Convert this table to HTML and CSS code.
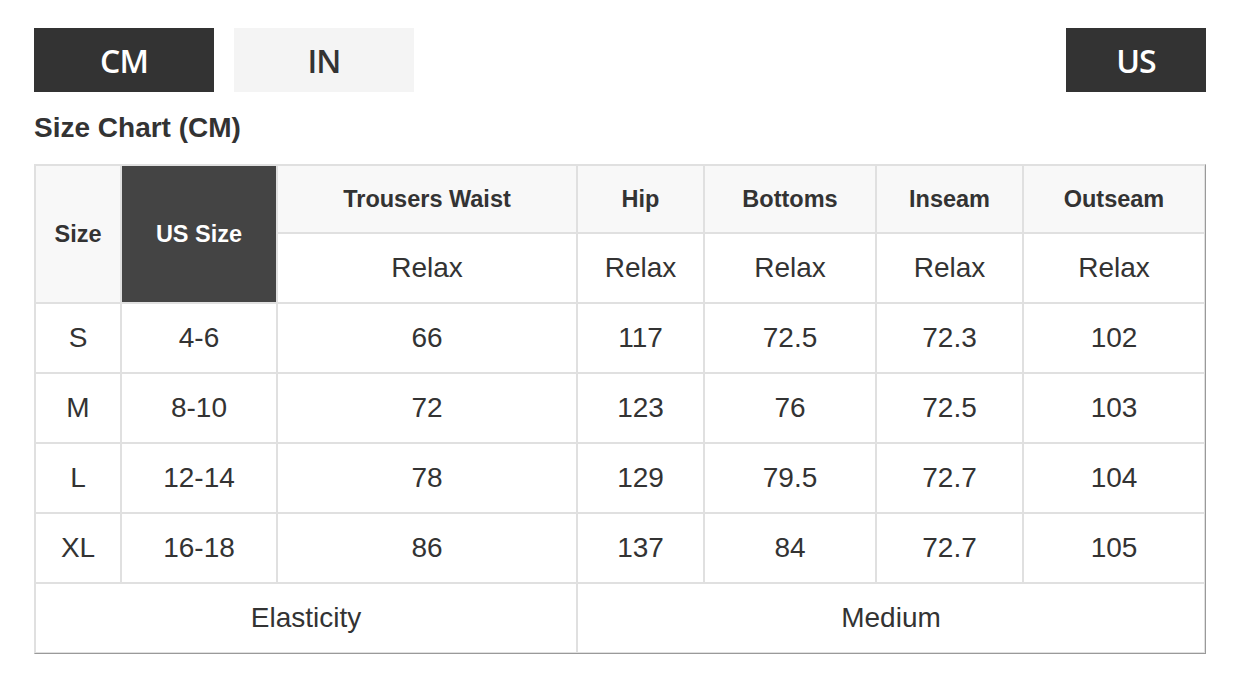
FILE: index.html
```html
<!DOCTYPE html>
<html>
<head>
<meta charset="utf-8">
<link rel="stylesheet" href="styles.css">
</head>
<body>
<div class="page">
  <div class="toolbar">
    <div class="units">
      <div class="btn active">CM</div>
      <div class="btn">IN</div>
    </div>
    <div class="btn active us">US</div>
  </div>
  <h2 class="title">Size Chart (CM)</h2>
  <table class="chart">
    <colgroup>
      <col class="c1"><col class="c2"><col class="c3"><col class="c4"><col class="c5"><col class="c6"><col class="c7">
    </colgroup>
    <tr class="hrow">
      <th rowspan="2" class="hd">Size</th>
      <th rowspan="2" class="dark">US Size</th>
      <th class="hd">Trousers Waist</th>
      <th class="hd">Hip</th>
      <th class="hd">Bottoms</th>
      <th class="hd">Inseam</th>
      <th class="hd">Outseam</th>
    </tr>
    <tr>
      <td>Relax</td><td>Relax</td><td>Relax</td><td>Relax</td><td>Relax</td>
    </tr>
    <tr><td>S</td><td>4-6</td><td>66</td><td>117</td><td>72.5</td><td>72.3</td><td>102</td></tr>
    <tr><td>M</td><td>8-10</td><td>72</td><td>123</td><td>76</td><td>72.5</td><td>103</td></tr>
    <tr><td>L</td><td>12-14</td><td>78</td><td>129</td><td>79.5</td><td>72.7</td><td>104</td></tr>
    <tr><td>XL</td><td>16-18</td><td>86</td><td>137</td><td>84</td><td>72.7</td><td>105</td></tr>
    <tr><td colspan="3">Elasticity</td><td colspan="4">Medium</td></tr>
  </table>
</div>
</body>
</html>
```

FILE: styles.css
```css
html, body {
  margin: 0;
  padding: 0;
  background: #fff;
}
.page {
  width: 1172px;
  padding: 28px 0 0 34px;
  color: #333;
  font-family: "Liberation Sans", Arial, sans-serif;
}
.toolbar {
  display: flex;
  justify-content: space-between;
  align-items: center;
}
.units {
  display: flex;
  gap: 20px;
}
.btn {
  width: 180px;
  height: 64px;
  display: flex;
  align-items: center;
  justify-content: center;
  background: #f4f4f4;
  color: #333;
  font-family: "Open Sans", sans-serif;
  font-size: 32px;
  font-weight: 600;
  letter-spacing: -1px;
}
.btn.active {
  background: #333;
  color: #fff;
}
.btn.us {
  width: 140px;
}
.title {
  margin: 20px 0 0;
  font-size: 28px;
  font-weight: bold;
  line-height: 32px;
  height: 52px;
}
.chart {
  width: 1172px;
  table-layout: fixed;
  border-collapse: separate;
  border-spacing: 0;
  border: 1px solid;
  border-color: #e0e0e0 #9a9a9a #9a9a9a #e0e0e0;
}
.c1 { width: 86px; }
.c2 { width: 156px; }
.c3 { width: 300px; }
.c4 { width: 127px; }
.c5 { width: 172px; }
.c6 { width: 147px; }
.c7 { width: 182px; }
.chart th, .chart td {
  border: 1px solid #e0e0e0;
  height: 68px;
  padding: 0;
  text-align: center;
  vertical-align: middle;
}
.chart td {
  font-size: 28px;
  font-weight: normal;
}
.chart th {
  font-size: 23.5px;
  font-weight: bold;
}
.chart .hrow th {
  height: 66px;
}
.chart .hd {
  background: #f8f8f8;
}
.chart .dark {
  background: #444;
  color: #fff;
}
```
